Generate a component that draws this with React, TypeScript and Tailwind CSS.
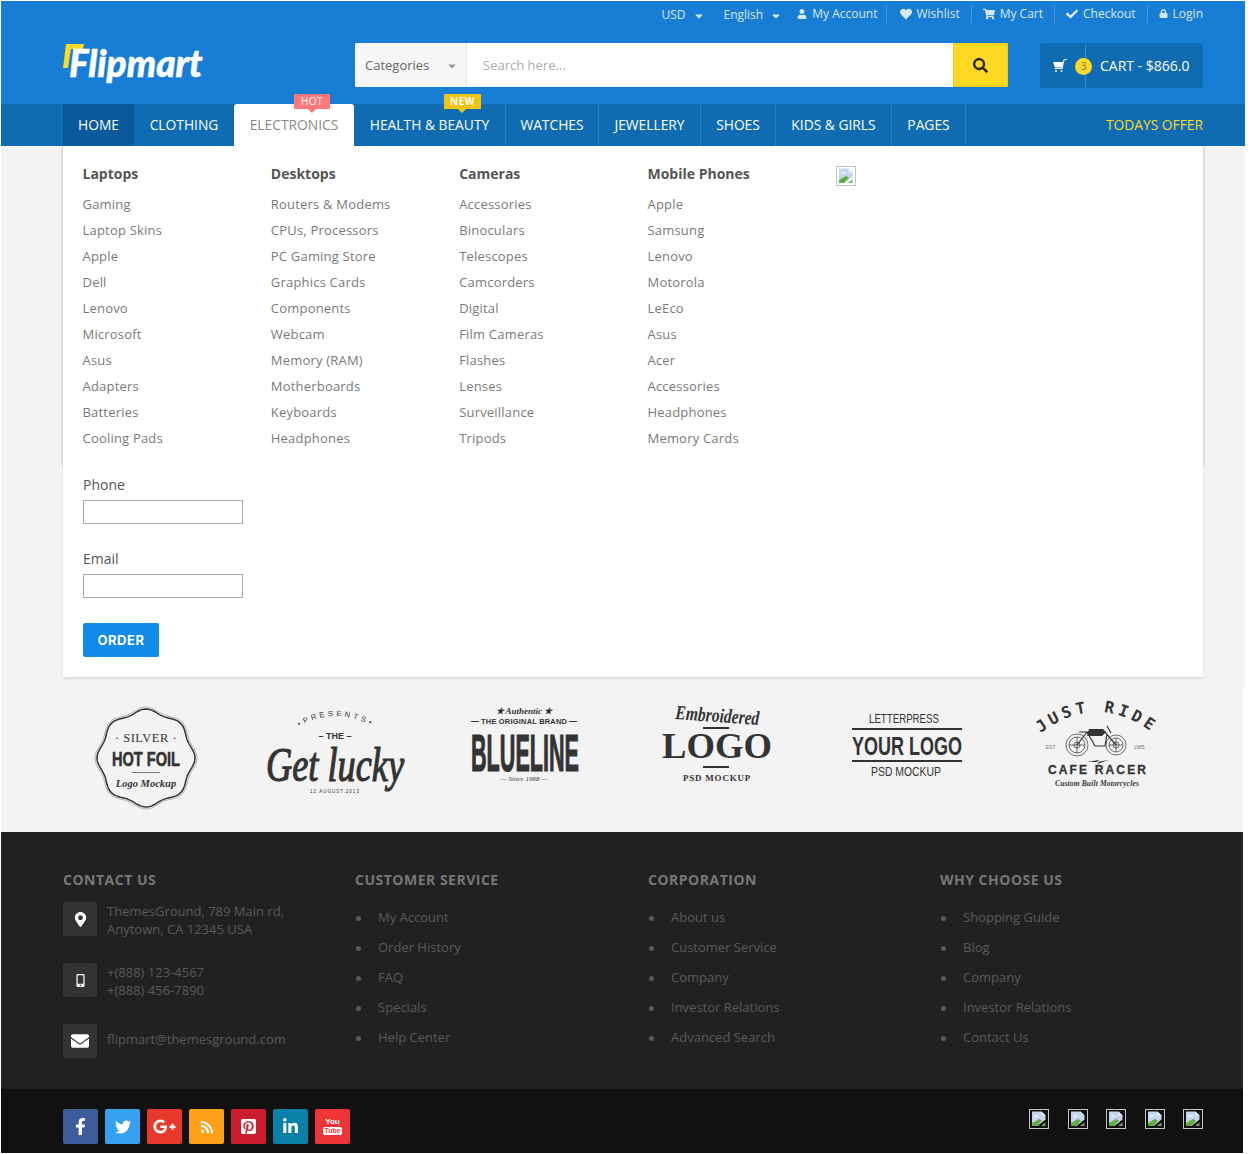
import {
  FaCaretDown,
  FaCheck,
  FaEnvelope,
  FaFacebookF,
  FaGooglePlusG,
  FaHeart,
  FaLinkedinIn,
  FaLock,
  FaMapMarkerAlt,
  FaMobileAlt,
  FaPinterestSquare,
  FaRss,
  FaSearch,
  FaShoppingCart,
  FaTwitter,
  FaUser,
} from "react-icons/fa";

const menu = [
  { title: "Laptops", links: ["Gaming", "Laptop Skins", "Apple", "Dell", "Lenovo", "Microsoft", "Asus", "Adapters", "Batteries", "Cooling Pads"] },
  { title: "Desktops", links: ["Routers & Modems", "CPUs, Processors", "PC Gaming Store", "Graphics Cards", "Components", "Webcam", "Memory (RAM)", "Motherboards", "Keyboards", "Headphones"] },
  { title: "Cameras", links: ["Accessories", "Binoculars", "Telescopes", "Camcorders", "Digital", "Film Cameras", "Flashes", "Lenses", "Surveillance", "Tripods"] },
  { title: "Mobile Phones", links: ["Apple", "Samsung", "Lenovo", "Motorola", "LeEco", "Asus", "Acer", "Accessories", "Headphones", "Memory Cards"] },
];

const footerLists = [
  { title: "Customer Service", links: ["My Account", "Order History", "FAQ", "Specials", "Help Center"] },
  { title: "Corporation", links: ["About us", "Customer Service", "Company", "Investor Relations", "Advanced Search"] },
  { title: "Why Choose Us", links: ["Shopping Guide", "Blog", "Company", "Investor Relations", "Contact Us"] },
];

const BrokenImage = () => (
  <svg width="20" height="20" viewBox="0 0 20 20" className="block">
    <rect x="0.5" y="0.5" width="19" height="19" fill="none" stroke="#c4c4c4" />
    <path d="M3 2.5h9.5l4 4v4L8.5 17H3z" fill="#c5d6f0" />
    <path d="M12.5 2.5v4h4z" fill="#eef1f6" />
    <path d="M5 7.5c0-1 2-1.5 3-1 1-.3 2 .3 2 1z" fill="#fff" />
    <path d="M3 17v-3l7-4 3 1.5L8 17z" fill="#5fad3f" />
    <path d="M12 17l4.5-3.6V17z" fill="#79a868" />
  </svg>
);

const waves = Array.from({ length: 121 }, (_, i) => {
  const t = (i / 120) * Math.PI * 2;
  const r = 47 + 2 * Math.cos(8 * t);
  return `${(83 + r * Math.sin(t)).toFixed(1)},${(63 - r * Math.cos(t)).toFixed(1)}`;
}).join(" ");

const c = "#333333";

const SilverLogo = () => (
  <svg width="190" height="120" viewBox="0 0 190 120" fill={c} className="overflow-visible">
    <polygon points={waves} fill="none" stroke={c} strokeWidth="1.5" />
    <polygon points={waves} fill="none" stroke="#999" strokeWidth="0.7" transform="translate(83 63) scale(1.04) translate(-83 -63)" />
    <text x="83" y="47" textAnchor="middle" fontFamily="Liberation Serif" fontSize="12.5" letterSpacing="0.5">· SILVER ·</text>
    <text x="83" y="71" textAnchor="middle" fontFamily="Liberation Sans" fontWeight="700" fontSize="21" textLength="68" lengthAdjust="spacingAndGlyphs" stroke={c} strokeWidth="0.6">HOT FOIL</text>
    <rect x="69" y="77" width="28" height="1" fill="#777" />
    <text x="83" y="92" textAnchor="middle" fontFamily="Liberation Serif" fontStyle="italic" fontWeight="700" fontSize="10.5">Logo Mockup</text>
  </svg>
);

const LuckyLogo = () => (
  <svg width="190" height="120" viewBox="0 0 190 120" fill={c} className="overflow-visible">
    <path id="presents-arc" d="M36 38 Q82 4 130 38" fill="none" />
    <text fontFamily="Liberation Sans" fontSize="7.5">
      <textPath href="#presents-arc" startOffset="50%" textAnchor="middle" letterSpacing="3.2">•PRESENTS•</textPath>
    </text>
    <text x="82" y="44" textAnchor="middle" fontFamily="Liberation Sans" fontWeight="700" fontSize="9">– THE –</text>
    <text x="82" y="86" textAnchor="middle" fontFamily="Liberation Serif" fontStyle="italic" fontSize="48" textLength="138" lengthAdjust="spacingAndGlyphs" stroke={c} strokeWidth="1.2">Get lucky</text>
    <text x="82" y="98" textAnchor="middle" fontFamily="Liberation Sans" fontSize="4.5" letterSpacing="1">12.AUGUST.2013</text>
  </svg>
);

const BluelineLogo = () => (
  <svg width="190" height="120" viewBox="0 0 190 120" fill={c} className="overflow-visible">
    <text x="81" y="19" textAnchor="middle" fontFamily="Liberation Serif" fontStyle="italic" fontWeight="700" fontSize="9">★ Authentic ★</text>
    <text x="81" y="29" textAnchor="middle" fontFamily="Liberation Sans" fontWeight="700" fontSize="7.5" textLength="86">THE ORIGINAL BRAND</text>
    <rect x="28" y="26" width="8" height="1" />
    <rect x="126" y="26" width="8" height="1" />
    <text x="82" y="76" textAnchor="middle" fontFamily="Liberation Sans" fontWeight="700" fontSize="52" textLength="108" lengthAdjust="spacingAndGlyphs" stroke={c} strokeWidth="1.2">BLUELINE</text>
    <text x="81" y="86" textAnchor="middle" fontFamily="Liberation Serif" fontStyle="italic" fontSize="7">— Since 1968 —</text>
  </svg>
);

const EmbroideredLogo = () => (
  <svg width="190" height="120" viewBox="0 0 190 120" fill={c} className="overflow-visible">
    <text x="84" y="27" textAnchor="middle" fontFamily="Liberation Serif" fontStyle="italic" fontWeight="700" fontSize="20" transform="rotate(4 84 27)" textLength="84" lengthAdjust="spacingAndGlyphs">Embroidered</text>
    <rect x="70" y="32" width="26" height="2" />
    <text x="84" y="63" textAnchor="middle" fontFamily="Liberation Serif" fontWeight="700" fontSize="35" textLength="110" lengthAdjust="spacingAndGlyphs">LOGO</text>
    <rect x="70" y="71" width="26" height="2" />
    <text x="84" y="86" textAnchor="middle" fontFamily="Liberation Serif" fontWeight="700" fontSize="9" letterSpacing="0.8">PSD MOCKUP</text>
  </svg>
);

const LetterpressLogo = () => (
  <svg width="190" height="120" viewBox="0 0 190 120" fill={c} className="overflow-visible">
    <text x="81" y="28" textAnchor="middle" fontFamily="Liberation Sans" fontSize="12.5" textLength="70" lengthAdjust="spacingAndGlyphs">LETTERPRESS</text>
    <rect x="29" y="33" width="110" height="2" />
    <text x="84" y="60" textAnchor="middle" fontFamily="Liberation Sans" fontWeight="700" fontSize="26" textLength="110" lengthAdjust="spacingAndGlyphs">YOUR LOGO</text>
    <rect x="29" y="65" width="110" height="2" />
    <text x="83" y="81" textAnchor="middle" fontFamily="Liberation Sans" fontSize="12" textLength="70" lengthAdjust="spacingAndGlyphs">PSD MOCKUP</text>
  </svg>
);

const RacerLogo = () => (
  <svg width="190" height="120" viewBox="0 0 190 120" fill={c} className="overflow-visible">
    <path id="ride-arc" d="M28 38 Q84 -4 140 38" fill="none" />
    <text fontFamily="DejaVu Sans Mono" fontSize="16" fontWeight="700">
      <textPath href="#ride-arc" startOffset="50%" textAnchor="middle" letterSpacing="4">JUST RIDE</textPath>
    </text>
    <g fill="none" stroke={c} strokeWidth="0.7">
      <circle cx="64" cy="50" r="11" />
      <circle cx="64" cy="50" r="8" />
      <circle cx="64" cy="50" r="3" />
      <circle cx="103" cy="50" r="10" />
      <circle cx="103" cy="50" r="7" />
      <circle cx="103" cy="50" r="3" />
      <path d="M64 42v16M56 50h16M103 43v14M96 50h14" />
      <path d="M64 50 74 37h18l11 13M74 37l8 14h10l2-12M66 37h12M94 31l4 7" strokeWidth="1.2" />
    </g>
    <path d="M76 34h14l3 3-4 4H74z" />
    <text x="38" y="54" textAnchor="middle" fontFamily="Liberation Sans" fontSize="5" fill="#777">EST.</text>
    <text x="126" y="54" textAnchor="middle" fontFamily="Liberation Sans" fontSize="5" fill="#777">1985</text>
    <path d="M74 67l12-2-2 2 12-2-12 4 2-2z" />
    <text x="84" y="79" textAnchor="middle" fontFamily="Liberation Sans" fontWeight="700" fontSize="12" textLength="98" stroke={c} strokeWidth="0.3">CAFE RACER</text>
    <text x="84" y="91" textAnchor="middle" fontFamily="Liberation Serif" fontStyle="italic" fontWeight="700" fontSize="7.5" textLength="84">Custom Built Motorcycles</text>
  </svg>
);

const Separator = () => <span className="mx-[11px] h-[18px] w-px bg-[#4a97de]" />;

const BasketIcon = () => (
  <svg width="14" height="13" viewBox="0 0 14 13" fill="#fff" className="ml-[13px] mb-px">
    <path d="M0 3h10l-1 5.5H2z" />
    <path d="M10 3l.8-3H14v1h-2.4L9.5 10H1.5V9h7.2z" />
    <circle cx="3" cy="12" r="1" />
    <circle cx="8.5" cy="12" r="1" />
  </svg>
);

export default function App() {
  return (
    <div className="min-h-[1154px] w-[1256px] bg-white pl-px pt-px font-['Open_Sans',sans-serif]">
      <div className="w-[1244px] bg-[#f3f3f3]">
        <header className="bg-[#187dd5]">
          <div className="ml-[62px] w-[1140px]">
            <div className="flex h-[25px] items-center justify-end text-[12px] text-[#d9e8f6]">
              <span className="mt-[3px]">USD</span>
              <FaCaretDown className="ml-[7px] mt-[4px] size-3" />
              <span className="ml-[19px] mt-[3px]">English</span>
              <FaCaretDown className="ml-[7px] mt-[4px] size-3" />
              <FaUser className="ml-[15px] size-[10px]" />
              <span className="ml-[5px] mr-[-2px]">My Account</span>
              <Separator />
              <FaHeart className="ml-[2px] mr-1 size-3" />
              <span>Wishlist</span>
              <Separator />
              <FaShoppingCart className="mr-[5px] size-3" />
              <span>My Cart</span>
              <Separator />
              <FaCheck className="mr-[5px] size-3" />
              <span>Checkout</span>
              <Separator />
              <FaLock className="mr-[5px] size-[9px]" />
              <span>Login</span>
            </div>
            <div className="flex h-[78px] pt-[17px]">
              <a className="relative block h-[44px] w-[292px]">
                <svg width="26" height="28" viewBox="0 0 26 28" className="absolute left-0 top-px">
                  <path d="M3 0h18l-1 5H8L5 24H0z" fill="#fdd922" />
                </svg>
                <span className="absolute left-[6px] top-[-4px] font-['Lato',sans-serif] text-[37px] font-black italic leading-[48px] text-white [-webkit-text-stroke:0.5px_white]">
                  Flipmart
                </span>
              </a>
              <div className="flex h-[44px] w-[653px] overflow-hidden rounded-l-[2px] bg-white">
                <div className="flex w-[112px] items-center border-r border-[#e5e5e5] bg-[#f6f6f6] pl-[10px] pt-px text-[13px] text-[#666]">
                  <span>Categories</span>
                  <FaCaretDown className="ml-[17px] size-3 text-[#999]" />
                </div>
                <div className="flex flex-1 items-center pl-4 pt-px text-[13px] text-[#aaa]">Search here...</div>
                <div className="flex w-[55px] items-center justify-center border border-[#f2ca14] bg-[#fdd922]">
                  <FaSearch className="mt-px size-[15px] text-[#2b2b2b]" />
                </div>
              </div>
              <div className="relative ml-[32px] flex h-[45px] w-[163px] items-center rounded-[3px] bg-[#0f6cb2] text-white">
                <BasketIcon />
                <span className="absolute left-[45px] top-px h-[43px] w-px bg-[#3f8cc7]" />
                <span className="absolute left-[35px] top-[15px] flex size-[17px] items-center justify-center rounded-full bg-[#fdd922] text-[10px] text-[#777]">3</span>
                <span className="ml-[33px] text-[14px]">CART - $866.0</span>
              </div>
            </div>
          </div>
        </header>

        <nav className="relative z-20 bg-[#0f6cb2]">
          <div className="ml-[62px] flex h-[42px] w-[1140px] items-stretch text-[13.8px] uppercase text-white">
            <a className="flex w-[71px] items-center justify-center bg-[#0a5a9b]">Home</a>
            <a className="flex w-[100px] items-center justify-center">Clothing</a>
            <a className="relative flex w-[120px] items-center justify-center rounded-t-[3px] bg-white text-[#8a8a8a]">
              Electronics
              <span className="absolute left-[60px] top-[-10px] flex h-[15px] w-[36px] items-center justify-center bg-[#ff7878] text-[10px] tracking-[0.5px] text-white">
                Hot
                <span className="absolute left-[14px] top-[15px] size-0 border-x-[4px] border-t-[4px] border-x-transparent border-t-[#ff7878]" />
              </span>
            </a>
            <a className="relative flex w-[152px] items-center justify-center border-r border-[#2c80bf]">
              Health &amp; Beauty
              <span className="absolute left-[90px] top-[-10px] flex h-[15px] w-[37px] items-center justify-center bg-[#f2c40c] text-[10px] font-bold tracking-[0.5px] text-white">
                New
                <span className="absolute left-[14px] top-[15px] size-0 border-x-[4px] border-t-[4px] border-x-transparent border-t-[#f2c40c]" />
              </span>
            </a>
            <a className="flex w-[93px] items-center justify-center border-r border-[#2c80bf]">Watches</a>
            <a className="flex w-[102px] items-center justify-center border-r border-[#2c80bf]">Jewellery</a>
            <a className="flex w-[75px] items-center justify-center border-r border-[#2c80bf]">Shoes</a>
            <a className="flex w-[116px] items-center justify-center border-r border-[#2c80bf]">Kids &amp; Girls</a>
            <a className="flex w-[74px] items-center justify-center border-r border-[#2c80bf]">Pages</a>
            <a className="ml-auto flex items-center text-[#fdd922]">Todays Offer</a>
          </div>
        </nav>

        <div className="ml-[62px] w-[1140px] pb-3">
          <div className="relative z-10 grid h-[321px] grid-cols-[188.33px_188.33px_188.33px_188.33px_1fr] bg-white pl-[19.5px] pr-5 pt-[17px] shadow-[0_0_3px_rgba(0,0,0,0.3)]">
            {menu.map((col) => (
              <div key={col.title}>
                <h3 className="text-[14px] font-bold leading-[22px] text-[#555]">{col.title}</h3>
                <ul className="mt-[6px]">
                  {col.links.map((link) => (
                    <li key={link} className="h-[26px] text-[13px] leading-[26px] tracking-[0.2px] text-[#7a7a7a]">{link}</li>
                  ))}
                </ul>
              </div>
            ))}
            <div className="pt-[3px]">
              <BrokenImage />
            </div>
          </div>
          <div className="relative z-20 h-[210px] bg-white pl-5 pt-[8px] shadow-[0_2px_3px_rgba(0,0,0,0.1)]">
            <label className="block text-[14px] leading-[20px] text-[#555]">Phone</label>
            <input className="mt-[5px] block h-[24px] w-[160px] border border-[#a9a9a9] bg-white" />
            <label className="mt-[25px] block text-[14px] leading-[20px] text-[#555]">Email</label>
            <input className="mt-[5px] block h-[24px] w-[160px] border border-[#a9a9a9] bg-white" />
            <button className="mt-[25px] flex h-[34px] w-[76px] items-center justify-center rounded-[2px] bg-[#108bea] pt-px font-['Inter',sans-serif] text-[13px] font-bold tracking-[0.5px] text-white">
              ORDER
            </button>
          </div>
        </div>
      </div>

      <div className="h-[143px] w-[1242px] bg-[#f3f3f3] pt-[6px]">
        <div className="ml-[62px] grid w-[1140px] grid-cols-6">
          <SilverLogo />
          <LuckyLogo />
          <BluelineLogo />
          <EmbroideredLogo />
          <LetterpressLogo />
          <RacerLogo />
        </div>
      </div>

      <footer className="w-[1242px]">
        <div className="h-[257px] bg-[#212121]">
          <div className="ml-[62px] grid w-[1140px] grid-cols-[292px_293px_292px_1fr] pt-[38px]">
            <div>
              <h4 className="text-[14px] font-bold uppercase leading-[20px] tracking-[0.5px] text-[#777]">Contact Us</h4>
              <div className="mt-[12px] flex h-[34px]">
                <span className="flex size-[34px] items-center justify-center rounded-[2px] bg-[#333] text-white">
                  <FaMapMarkerAlt className="size-[15px]" />
                </span>
                <p className="ml-[10px] text-[13px] leading-[18px] text-[#5a5a5a]">
                  ThemesGround, 789 Main rd,<br />Anytown, CA 12345 USA
                </p>
              </div>
              <div className="mt-[27px] flex h-[34px]">
                <span className="flex size-[34px] items-center justify-center rounded-[2px] bg-[#333] text-white">
                  <FaMobileAlt className="size-[13px]" />
                </span>
                <p className="ml-[10px] text-[13px] leading-[18px] text-[#5a5a5a]">
                  +(888) 123-4567<br />+(888) 456-7890
                </p>
              </div>
              <div className="mt-[27px] flex h-[34px]">
                <span className="flex size-[34px] items-center justify-center rounded-[2px] bg-[#333] text-white">
                  <FaEnvelope className="size-[18px]" />
                </span>
                <p className="ml-[10px] text-[13px] leading-[30px] text-[#5a5a5a]">flipmart@themesground.com</p>
              </div>
            </div>
            {footerLists.map((col) => (
              <div key={col.title}>
                <h4 className="text-[14px] font-bold uppercase leading-[20px] tracking-[0.5px] text-[#777]">{col.title}</h4>
                <ul className="mt-[13px]">
                  {col.links.map((link) => (
                    <li key={link} className="flex h-[30px] items-center text-[13px] text-[#5a5a5a]">
                      <span className="ml-px mr-[17px] size-[5px] rounded-full bg-[#5a5a5a]" />
                      {link}
                    </li>
                  ))}
                </ul>
              </div>
            ))}
          </div>
        </div>
        <div className="h-[64px] bg-[#111]">
          <div className="ml-[62px] flex w-[1140px] justify-between pt-5">
            <div className="flex gap-[7px] text-white">
              <span className="flex size-[35px] items-center justify-center rounded-[2px] bg-[#3d5c99]"><FaFacebookF className="size-[17px]" /></span>
              <span className="flex size-[35px] items-center justify-center rounded-[2px] bg-[#36a0f1]"><FaTwitter className="size-[16px]" /></span>
              <span className="flex size-[35px] items-center justify-center rounded-[2px] bg-[#e8392a]"><FaGooglePlusG className="size-[23px]" /></span>
              <span className="flex size-[35px] items-center justify-center rounded-[2px] bg-[#fda016]"><FaRss className="size-[14px]" /></span>
              <span className="flex size-[35px] items-center justify-center rounded-[2px] bg-[#cb1d2c]"><FaPinterestSquare className="size-[17px]" /></span>
              <span className="flex size-[35px] items-center justify-center rounded-[2px] bg-[#0a7fa8]"><FaLinkedinIn className="size-[17px]" /></span>
              <span className="flex size-[35px] flex-col items-center justify-center rounded-[2px] bg-[#f03536] font-['Liberation_Sans',sans-serif]">
                <span className="text-[8px] font-bold leading-[8px]">You</span>
                <span className="mt-px rounded-[2px] bg-white px-px text-[7px] font-bold leading-[8px] text-[#f03536]">Tube</span>
              </span>
            </div>
            <div className="flex gap-[18.5px]">
              <BrokenImage />
              <BrokenImage />
              <BrokenImage />
              <BrokenImage />
              <BrokenImage />
            </div>
          </div>
        </div>
      </footer>
    </div>
  );
}
